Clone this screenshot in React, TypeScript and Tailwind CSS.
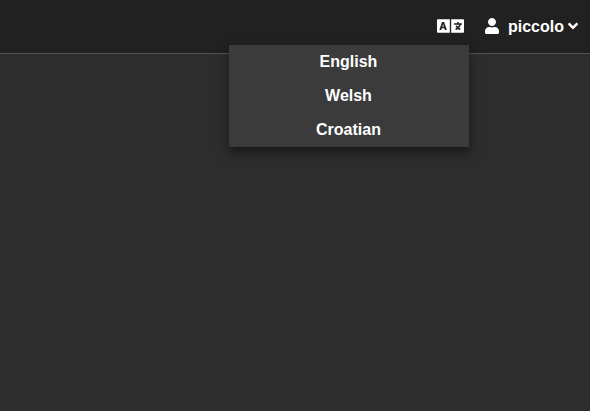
import { FaLanguage, FaUser, FaAngleDown } from "react-icons/fa";

const languages = ["English", "Welsh", "Croatian"];

export default function App() {
  return (
    <div className="h-[411px] w-[590px] overflow-hidden bg-[#2d2d2d] font-['Liberation_Sans',Arial,sans-serif] text-base font-bold text-white">
      <header className="flex h-[54px] items-center justify-end border-b border-[#555555] bg-[#212121] pr-[12px]">
        <div className="relative mr-[21px] mb-px flex">
          <FaLanguage className="h-[22px] w-[27px]" />
          <ul className="absolute top-[30px] right-[-5px] w-[240px] bg-[#3b3b3b] pr-px shadow-[0_5px_10px_rgba(0,0,0,0.5)]">
            {languages.map((language) => (
              <li key={language} className="h-[34px] text-center leading-[34px]">
                {language}
              </li>
            ))}
          </ul>
        </div>
        <FaUser className="mr-[9px] mb-px h-[16px] w-[14px]" />
        <span className="mr-[4px]">piccolo</span>
        <FaAngleDown className="mb-px h-[16px] w-[10px]" />
      </header>
    </div>
  );
}
